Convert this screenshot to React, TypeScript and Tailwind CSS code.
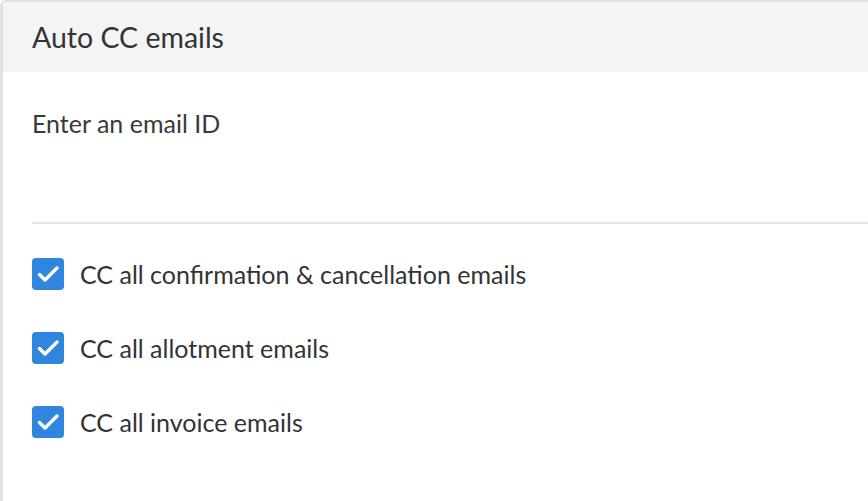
import React, { useState } from 'react';

const options = [
  'CC all confirmation & cancellation emails',
  'CC all allotment emails',
  'CC all invoice emails',
];

const CheckBox: React.FC<{ checked: boolean }> = ({ checked }) => (
  <span
    className={`flex h-[32px] w-[32px] shrink-0 items-center justify-center rounded-[4px] ${checked ? 'bg-[#2f86dc]' : 'border-2 border-[#bbb] bg-white'}`}
  >
    {checked && (
      <svg width="32" height="32" viewBox="0 0 32 32" fill="none">
        <path d="M7.5 16.5l5.5 5.5L25 10" stroke="white" strokeWidth="3.4" strokeLinecap="round" strokeLinejoin="round" />
      </svg>
    )}
  </span>
);

const App: React.FC = () => {
  const [checked, setChecked] = useState([true, true, true]);
  const [email, setEmail] = useState('');

  return (
    <div className="h-[501px] w-[868px] overflow-hidden bg-white font-['Lato','Noto_Sans',sans-serif] text-[#333]">
      <div className="h-full w-[900px] rounded-tl-[6px] border-l-[3px] border-t-2 border-[#e2e2e2]">
        {/* header */}
        <div className="flex h-[70px] items-center bg-[#f4f4f4] pl-[29px]">
          <h2 className="text-[28.5px] leading-none">Auto CC emails</h2>
        </div>

        <div className="pl-[29px]">
          <div className="mt-[31px] border-b-2 border-[#e4e4e4] pb-[79px]">
            <input
              className="block h-[40px] w-full text-[25px] text-[#333] placeholder:text-[#3a3a3a] focus:outline-none"
              placeholder="Enter an email ID"
              value={email}
              onChange={(e) => setEmail(e.target.value)}
            />
          </div>

          <div className="flex flex-col gap-[42px] pt-[34px]">
            {options.map((label, i) => (
              <label
                key={label}
                className="flex cursor-pointer items-center gap-[16px]"
                onClick={() => setChecked(checked.map((c, j) => (j === i ? !c : c)))}
              >
                <CheckBox checked={checked[i]} />
                <span className="text-[25px] leading-none">{label}</span>
              </label>
            ))}
          </div>
        </div>
      </div>
    </div>
  );
};

export default App;
